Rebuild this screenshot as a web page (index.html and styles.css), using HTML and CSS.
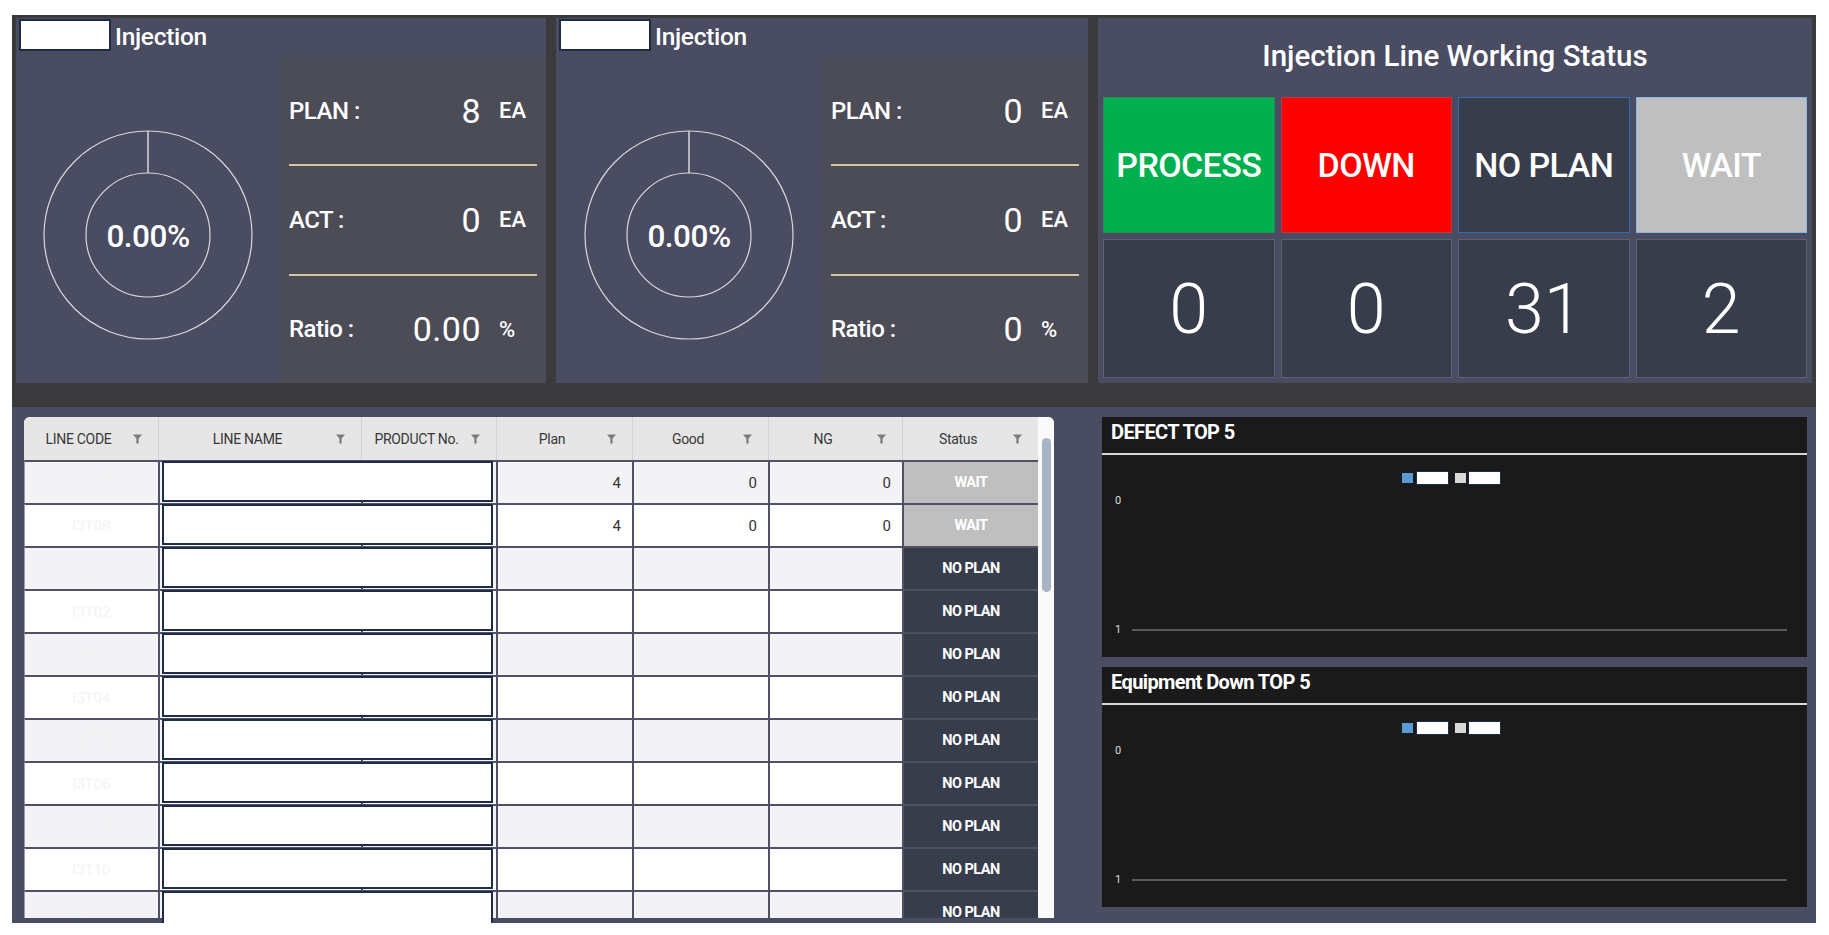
FILE: index.html
```html
<!DOCTYPE html>
<html lang="en">
<head>
<meta charset="utf-8">
<title>Injection Dashboard</title>
<link rel="stylesheet" href="styles.css">
</head>
<body>
<div class="frame">
  <div class="top">
    <section class="panel inj inj-a">
      <header class="panel-head"><span class="head-redact"></span><span class="panel-title">Injection</span></header>
      <div class="inj-body">
        <div class="donut-col">
          <div class="donut">
            <svg width="212" height="212" viewBox="0 0 212 212">
              <circle cx="106" cy="106" r="104" fill="none" stroke="#d8d8dc" stroke-width="1.2"/>
              <circle cx="106" cy="106" r="62" fill="none" stroke="#d8d8dc" stroke-width="1.2"/>
              <line x1="106" y1="2" x2="106" y2="44" stroke="#d8d8dc" stroke-width="1.5"/>
            </svg>
            <span class="donut-label">0.00%</span>
          </div>
        </div>
        <div class="stats">
          <div class="stat"><span class="stat-label">PLAN :</span><span class="stat-val">8</span><span class="stat-unit">EA</span></div>
          <div class="stat-line"></div>
          <div class="stat"><span class="stat-label">ACT :</span><span class="stat-val">0</span><span class="stat-unit">EA</span></div>
          <div class="stat-line"></div>
          <div class="stat"><span class="stat-label">Ratio :</span><span class="stat-val">0.00</span><span class="stat-unit">%</span></div>
        </div>
      </div>
    </section>
    <section class="panel inj inj-b">
      <header class="panel-head"><span class="head-redact"></span><span class="panel-title">Injection</span></header>
      <div class="inj-body">
        <div class="donut-col">
          <div class="donut">
            <svg width="212" height="212" viewBox="0 0 212 212">
              <circle cx="106" cy="106" r="104" fill="none" stroke="#d8d8dc" stroke-width="1.2"/>
              <circle cx="106" cy="106" r="62" fill="none" stroke="#d8d8dc" stroke-width="1.2"/>
              <line x1="106" y1="2" x2="106" y2="44" stroke="#d8d8dc" stroke-width="1.5"/>
            </svg>
            <span class="donut-label">0.00%</span>
          </div>
        </div>
        <div class="stats">
          <div class="stat"><span class="stat-label">PLAN :</span><span class="stat-val">0</span><span class="stat-unit">EA</span></div>
          <div class="stat-line"></div>
          <div class="stat"><span class="stat-label">ACT :</span><span class="stat-val">0</span><span class="stat-unit">EA</span></div>
          <div class="stat-line"></div>
          <div class="stat"><span class="stat-label">Ratio :</span><span class="stat-val">0</span><span class="stat-unit">%</span></div>
        </div>
      </div>
    </section>
    <section class="panel status">
      <h2 class="status-title">Injection Line Working Status</h2>
      <div class="tiles">
        <div class="tile t-process">PROCESS</div>
        <div class="tile t-down">DOWN</div>
        <div class="tile t-noplan">NO PLAN</div>
        <div class="tile t-wait">WAIT</div>
        <div class="tile t-num">0</div>
        <div class="tile t-num">0</div>
        <div class="tile t-num">31</div>
        <div class="tile t-num">2</div>
      </div>
    </section>
  </div>

  <div class="bottom">
    <div class="table-wrap">
      <div class="table">
        <div class="grid-main">
          <div class="thead">
            <div class="th"><span class="th-text">LINE CODE</span><svg class="funnel" width="9" height="10" viewBox="0 0 9 10"><path d="M0 0.5H9L5.6 4.6V9.6H3.4V4.6Z" fill="#7b7b7b"/></svg></div>
            <div class="th"><span class="th-text">LINE NAME</span><svg class="funnel" width="9" height="10" viewBox="0 0 9 10"><path d="M0 0.5H9L5.6 4.6V9.6H3.4V4.6Z" fill="#7b7b7b"/></svg></div>
            <div class="th"><span class="th-text">PRODUCT No.</span><svg class="funnel" width="9" height="10" viewBox="0 0 9 10"><path d="M0 0.5H9L5.6 4.6V9.6H3.4V4.6Z" fill="#7b7b7b"/></svg></div>
            <div class="th"><span class="th-text">Plan</span><svg class="funnel" width="9" height="10" viewBox="0 0 9 10"><path d="M0 0.5H9L5.6 4.6V9.6H3.4V4.6Z" fill="#7b7b7b"/></svg></div>
            <div class="th"><span class="th-text">Good</span><svg class="funnel" width="9" height="10" viewBox="0 0 9 10"><path d="M0 0.5H9L5.6 4.6V9.6H3.4V4.6Z" fill="#7b7b7b"/></svg></div>
            <div class="th"><span class="th-text">NG</span><svg class="funnel" width="9" height="10" viewBox="0 0 9 10"><path d="M0 0.5H9L5.6 4.6V9.6H3.4V4.6Z" fill="#7b7b7b"/></svg></div>
            <div class="th"><span class="th-text">Status</span><svg class="funnel" width="9" height="10" viewBox="0 0 9 10"><path d="M0 0.5H9L5.6 4.6V9.6H3.4V4.6Z" fill="#7b7b7b"/></svg></div>
          </div>
          <div class="tbody">
            <div class="tr"><div class="td code">I3T07</div><div class="td"></div><div class="td"></div><div class="td num">4</div><div class="td num">0</div><div class="td num">0</div><div class="td st st-wait">WAIT</div></div>
            <div class="tr"><div class="td code">I3T08</div><div class="td"></div><div class="td"></div><div class="td num">4</div><div class="td num">0</div><div class="td num">0</div><div class="td st st-wait">WAIT</div></div>
            <div class="tr"><div class="td code">I3T01</div><div class="td"></div><div class="td"></div><div class="td num"></div><div class="td num"></div><div class="td num"></div><div class="td st st-noplan">NO PLAN</div></div>
            <div class="tr"><div class="td code">I3T02</div><div class="td"></div><div class="td"></div><div class="td num"></div><div class="td num"></div><div class="td num"></div><div class="td st st-noplan">NO PLAN</div></div>
            <div class="tr"><div class="td code">I3T03</div><div class="td"></div><div class="td"></div><div class="td num"></div><div class="td num"></div><div class="td num"></div><div class="td st st-noplan">NO PLAN</div></div>
            <div class="tr"><div class="td code">I3T04</div><div class="td"></div><div class="td"></div><div class="td num"></div><div class="td num"></div><div class="td num"></div><div class="td st st-noplan">NO PLAN</div></div>
            <div class="tr"><div class="td code">I3T05</div><div class="td"></div><div class="td"></div><div class="td num"></div><div class="td num"></div><div class="td num"></div><div class="td st st-noplan">NO PLAN</div></div>
            <div class="tr"><div class="td code">I3T06</div><div class="td"></div><div class="td"></div><div class="td num"></div><div class="td num"></div><div class="td num"></div><div class="td st st-noplan">NO PLAN</div></div>
            <div class="tr"><div class="td code">I3T09</div><div class="td"></div><div class="td"></div><div class="td num"></div><div class="td num"></div><div class="td num"></div><div class="td st st-noplan">NO PLAN</div></div>
            <div class="tr"><div class="td code">I3T10</div><div class="td"></div><div class="td"></div><div class="td num"></div><div class="td num"></div><div class="td num"></div><div class="td st st-noplan">NO PLAN</div></div>
            <div class="tr"><div class="td code">I3T11</div><div class="td"></div><div class="td"></div><div class="td num"></div><div class="td num"></div><div class="td num"></div><div class="td st st-noplan">NO PLAN</div></div>
          </div>
        </div>
        <div class="scrollbar"><div class="thumb"></div></div>
      </div>
      <div class="redactions">
        <div class="redact-box"></div><div class="redact-box"></div><div class="redact-box"></div>
        <div class="redact-box"></div><div class="redact-box"></div><div class="redact-box"></div>
        <div class="redact-box"></div><div class="redact-box"></div><div class="redact-box"></div>
        <div class="redact-box"></div><div class="redact-box"></div>
      </div>
    </div>

    <div class="charts">
      <div class="chart">
        <div class="chart-head">DEFECT TOP 5</div>
        <div class="chart-body">
          <div class="legend"><span class="lg-sq lg-blue"></span><span class="lg-box"></span><span class="lg-sq lg-gray"></span><span class="lg-box"></span></div>
          <div class="axis-top">0</div>
          <div class="axis-spacer"></div>
          <div class="axis-bottom"><span>1</span><span class="axis-line"></span></div>
        </div>
      </div>
      <div class="chart">
        <div class="chart-head">Equipment Down TOP 5</div>
        <div class="chart-body">
          <div class="legend"><span class="lg-sq lg-blue"></span><span class="lg-box"></span><span class="lg-sq lg-gray"></span><span class="lg-box"></span></div>
          <div class="axis-top">0</div>
          <div class="axis-spacer"></div>
          <div class="axis-bottom"><span>1</span><span class="axis-line"></span></div>
        </div>
      </div>
    </div>
  </div>
</div>
</body>
</html>
```

FILE: styles.css
```css
* { box-sizing: border-box; }

body {
  margin: 0;
  background: #ffffff;
  font-family: Roboto, "Noto Sans", "Liberation Sans", sans-serif;
  color: #ffffff;
}

.frame {
  margin: 15px 0 0 12px;
  width: 1804px;
  background: #3b3b3d;
  padding-top: 3px;
  display: flex;
  flex-direction: column;
  row-gap: 24px;
}

.top {
  display: flex;
  gap: 10px;
  padding: 0 4px;
  height: 365px;
}

.panel {
  background: #4a4c61;
}

.inj {
  display: flex;
  flex-direction: column;
}
.inj-a { width: 530px; }
.inj-b { width: 532px; }

.panel-head {
  height: 39px;
  display: flex;
  align-items: flex-start;
  padding: 1px 0 0 3px;
  flex: none;
}

.head-redact {
  width: 92px;
  height: 32px;
  background: #ffffff;
  border: 2px solid #1e2c48;
}

.panel-title {
  margin-left: 4px;
  font-size: 24.5px;
  font-weight: 500;
  line-height: 36px;
  letter-spacing: -0.3px;
}

.inj-body {
  flex: 1;
  display: flex;
}

.donut-col {
  flex: 1;
  display: flex;
  justify-content: center;
  align-items: flex-start;
  padding-top: 72px;
}

.donut {
  display: grid;
  place-items: center;
  width: 212px;
  height: 212px;
}
.donut > svg,
.donut > .donut-label {
  grid-area: 1 / 1;
}
.donut-label {
  font-size: 31.5px;
  font-weight: 500;
  letter-spacing: -0.5px;
  margin-top: 2px;
}

.stats {
  width: 266px;
  background: #4c4c57;
  display: flex;
  flex-direction: column;
  padding: 0 9px;
}

.stat {
  flex: 1;
  display: flex;
  align-items: center;
}

.stat-line {
  height: 2px;
  background: #d9c29e;
  flex: none;
}

.stat-label {
  flex: 1;
  font-size: 24px;
  font-weight: 500;
  letter-spacing: -0.5px;
}

.stat-val {
  font-size: 34px;
  font-weight: 400;
  letter-spacing: 0.5px;
}

.stat-unit {
  width: 38px;
  margin-left: 18px;
  font-size: 22px;
  font-weight: 500;
}

.status {
  flex: 1;
  display: flex;
  flex-direction: column;
}

.status-title {
  margin: 0;
  height: 79px;
  padding-bottom: 4px;
  display: flex;
  align-items: center;
  justify-content: center;
  font-size: 29.5px;
  font-weight: 500;
  letter-spacing: 0;
}

.tiles {
  display: grid;
  grid-template-columns: repeat(4, 1fr);
  grid-template-rows: 136px 139px;
  gap: 6px;
  padding: 0 5px;
}

.tile {
  display: flex;
  align-items: center;
  justify-content: center;
  font-size: 34px;
  font-weight: 500;
  letter-spacing: -0.6px;
  border: 1px solid transparent;
}

.t-process { background: #00b04f; border-color: #2f8a5a; }
.t-down { background: #ff0000; border-color: #b03a4a; }
.t-noplan { background: #383d4b; border-color: #2e6db4; }
.t-wait { background: #bfbfbf; border-color: #7fb7e8; }
.t-num {
  background: #383d4b;
  border-color: #5d6174;
  font-size: 70px;
  font-weight: 300;
  letter-spacing: 0;
}

/* bottom area */
.bottom {
  background: #4a4c61;
  height: 516px;
  display: flex;
  gap: 48px;
  padding: 10px 9px 0 12px;
}

.table-wrap {
  position: relative;
  width: 1030px;
  height: 501px;
  flex: none;
}

.table {
  display: flex;
  height: 100%;
  background: #ffffff;
  border-radius: 6px 6px 0 0;
  overflow: hidden;
}

.grid-main {
  width: 1014px;
  display: flex;
  flex-direction: column;
}

.thead,
.tr {
  display: grid;
  grid-template-columns: 134px 203px 135px 136px 136px 134px 136px;
}

.thead {
  height: 43px;
  flex: none;
  background: #e6e6e7;
}

.th {
  display: flex;
  align-items: center;
  padding-right: 16px;
  border-left: 1px solid #d3d3d5;
  font-size: 14px;
  color: #383838;
  letter-spacing: -0.3px;
}
.th:first-child { border-left: none; }
.th-text {
  flex: 1;
  text-align: center;
}
.funnel { flex: none; }

.tbody {
  flex: 1;
  overflow: hidden;
}

.tr { height: 43px; }

.td {
  border-top: 2px solid #4f5265;
  border-left: 2px solid #4f5265;
  background: #ffffff;
  display: flex;
  align-items: center;
  font-size: 15px;
  color: #333333;
}
.tr:nth-child(odd) .td { background: #f3f3f6; }
.td:first-child { border-left: 1px solid #9a9cab; }

.td.code {
  justify-content: center;
  color: #f7f7f9;
  text-shadow: 0 0 1px rgba(0, 0, 0, 0.06);
}

.td.num {
  justify-content: flex-end;
  padding-right: 11px;
}

.td.st {
  justify-content: center;
  font-size: 14.5px;
  font-weight: 700;
  color: #ffffff;
  letter-spacing: -0.5px;
}
.tr .td.st-wait { background: #bfbfbf; }
.tr .td.st-noplan { background: #383d4b; border-top-color: #4d5163; }

.scrollbar {
  width: 16px;
  background: #fafafa;
  padding: 21px 0 0 4px;
}
.thumb {
  width: 9px;
  height: 154px;
  background: #a8b3c3;
  border-radius: 5px;
}

.redactions {
  position: absolute;
  left: 138px;
  top: 44px;
  width: 331px;
  display: flex;
  flex-direction: column;
  gap: 2px;
}
.redact-box {
  height: 41px;
  background: #ffffff;
  border: 2px solid #1e2c48;
}

/* charts */
.charts {
  flex: 1;
  display: flex;
  flex-direction: column;
  gap: 10px;
}

.chart {
  height: 240px;
  background: #1a1a1a;
  display: flex;
  flex-direction: column;
}

.chart-head {
  height: 38px;
  flex: none;
  padding: 0 9px 7px;
  display: flex;
  align-items: center;
  font-size: 20px;
  font-weight: 700;
  letter-spacing: -0.6px;
  border-bottom: 2px solid #d6d6d6;
}

.chart-body {
  flex: 1;
  display: flex;
  flex-direction: column;
  padding: 16px 20px 20px 13px;
}

.legend {
  display: flex;
  justify-content: center;
  align-items: center;
  height: 13px;
}
.lg-sq { width: 11px; height: 10px; }
.lg-blue { background: #5b9bd5; margin-right: 3px; }
.lg-gray { background: #d9d9d9; margin-right: 2px; }
.lg-box {
  width: 33px;
  height: 14px;
  background: #ffffff;
  border: 1px solid #1e2c48;
}
.lg-box:nth-child(2) { margin-right: 6px; }

.axis-top {
  margin-top: 10px;
  font-size: 11px;
  line-height: 14px;
  color: #dcdcdc;
}

.axis-spacer { flex: 1; }

.axis-bottom {
  display: flex;
  align-items: center;
  gap: 11px;
  font-size: 11px;
  line-height: 14px;
  color: #dcdcdc;
}
.axis-line {
  flex: 1;
  height: 2px;
  background: #585858;
}
```
